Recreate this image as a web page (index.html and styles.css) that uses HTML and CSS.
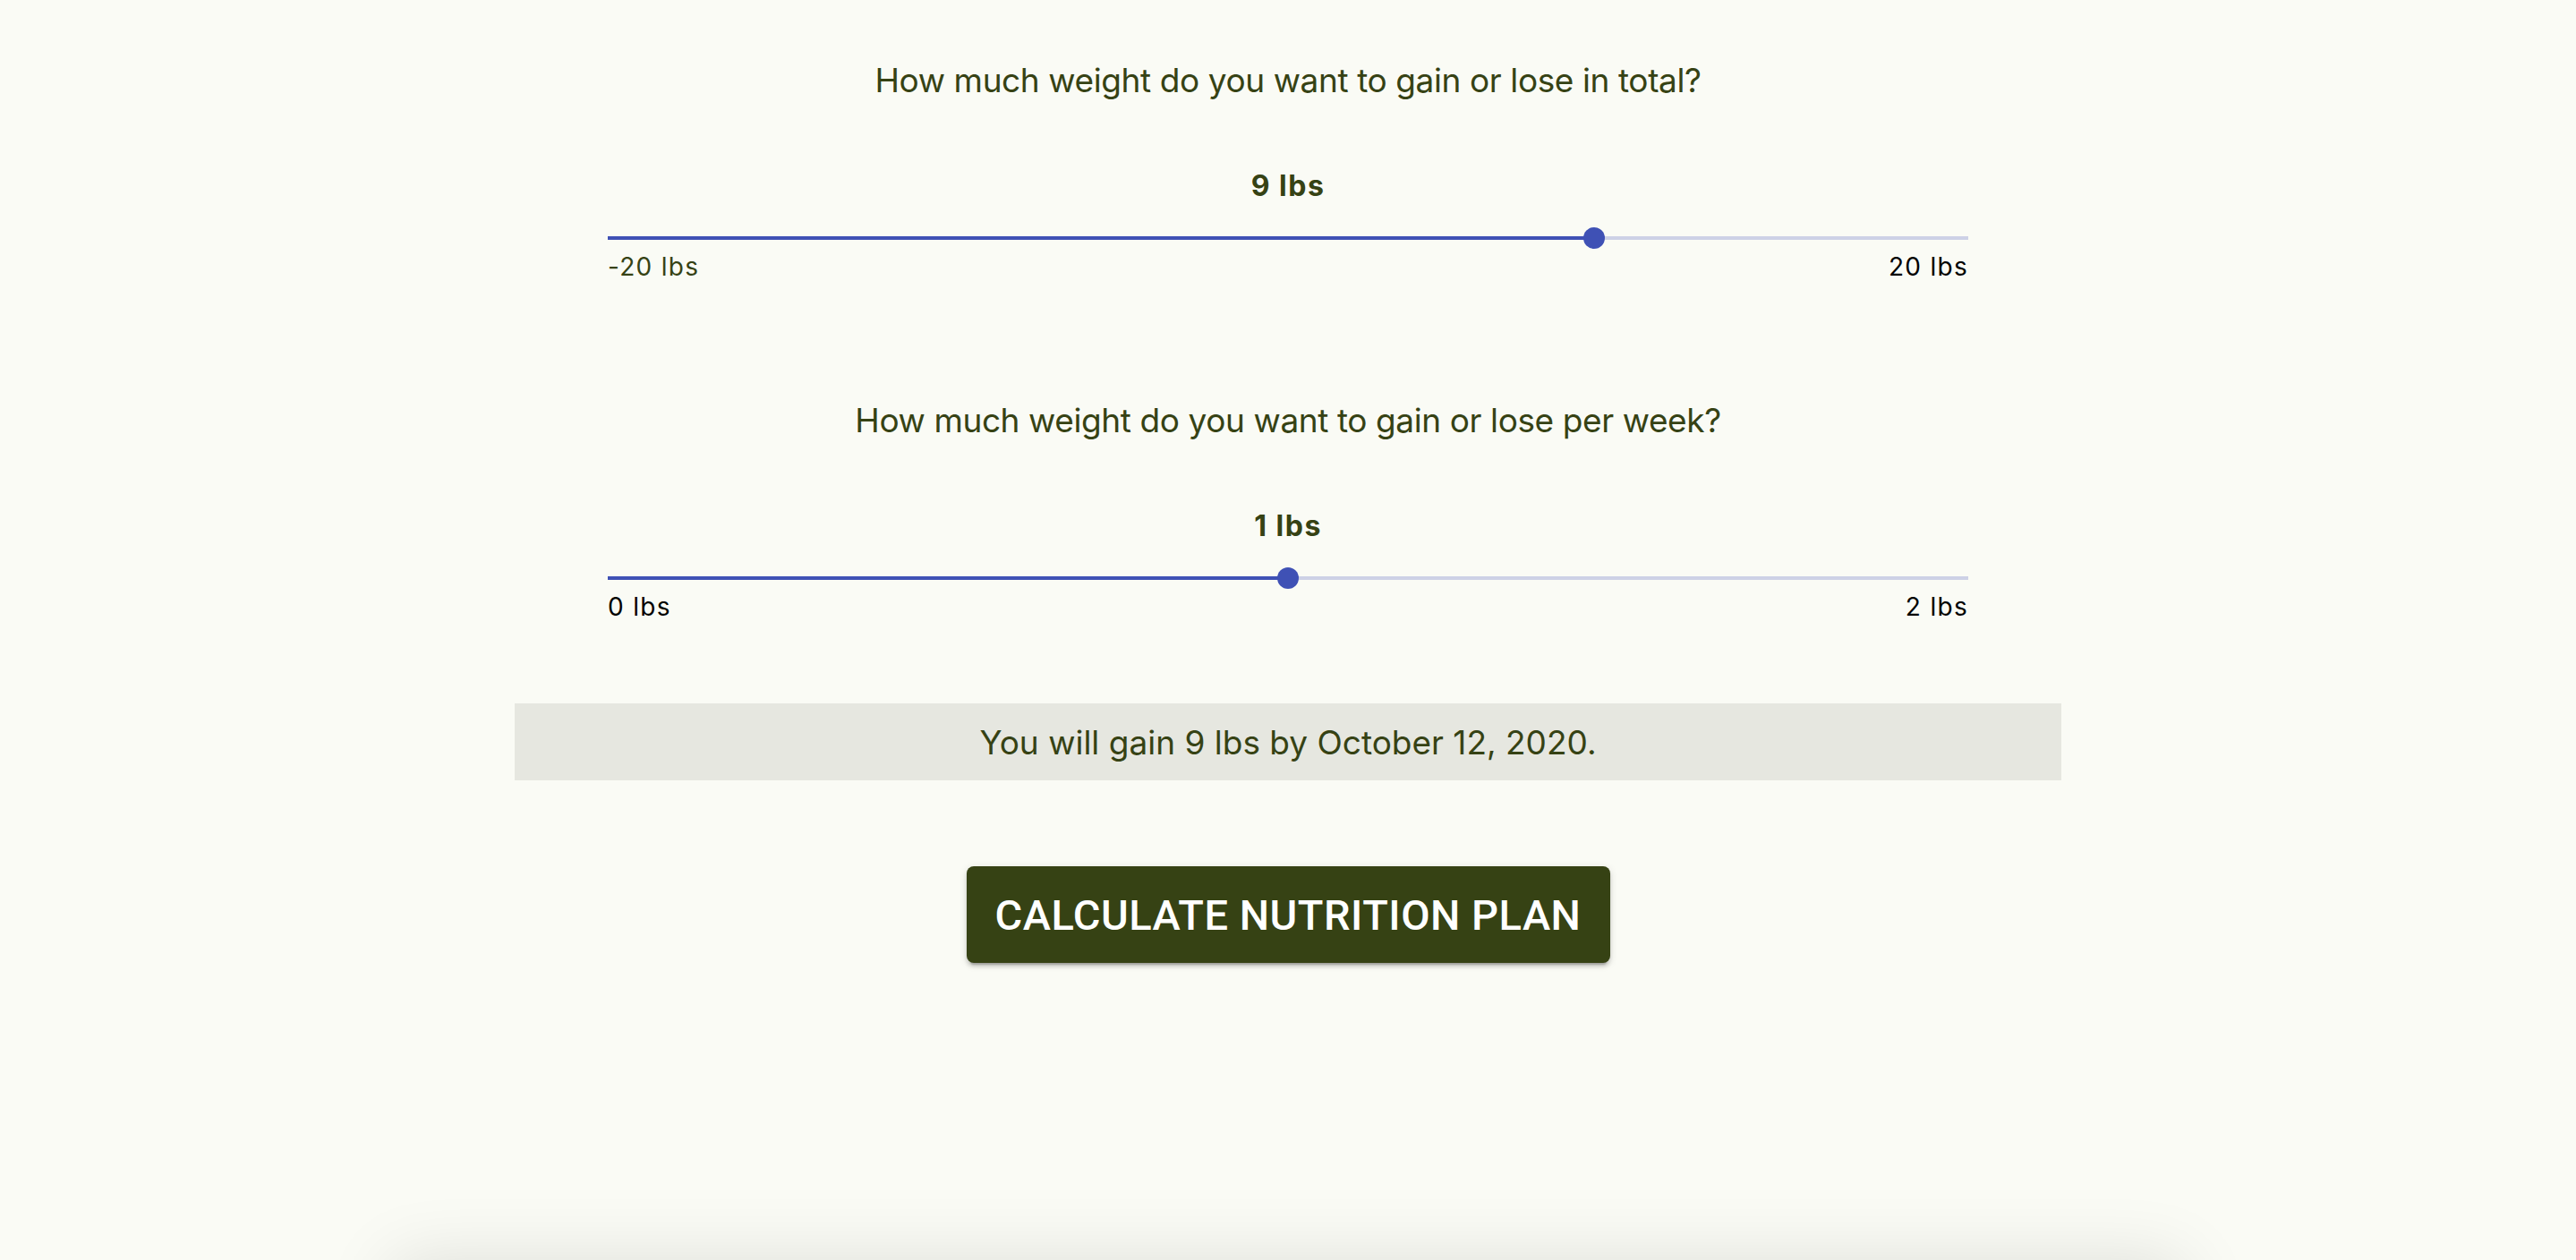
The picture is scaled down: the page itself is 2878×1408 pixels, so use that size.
FILE: index.html
```html
<!DOCTYPE html>
<html lang="en">
<head>
<meta charset="utf-8">
<title>Weight goal</title>
<link rel="stylesheet" href="styles.css">
</head>
<body>
<div class="page">
  <main class="form">
    <section class="question">
      <p class="prompt">How much weight do you want to gain or lose in total?</p>
      <div class="value">9 lbs</div>
      <div class="slider">
        <div class="rail"></div>
        <div class="track" style="width:72.5%"></div>
        <div class="thumb" style="left:72.5%"></div>
      </div>
      <div class="marks">
        <span class="mark olive">-20 lbs</span>
        <span class="mark">20 lbs</span>
      </div>
    </section>
    <section class="question second">
      <p class="prompt">How much weight do you want to gain or lose per week?</p>
      <div class="value">1 lbs</div>
      <div class="slider">
        <div class="rail"></div>
        <div class="track" style="width:50%"></div>
        <div class="thumb" style="left:50%"></div>
      </div>
      <div class="marks">
        <span class="mark">0 lbs</span>
        <span class="mark">2 lbs</span>
      </div>
    </section>
    <div class="result">You will gain 9 lbs by October 12, 2020.</div>
    <div class="actions">
      <button class="btn" type="button">CALCULATE NUTRITION PLAN</button>
    </div>
  </main>
  <div class="next-card"></div>
</div>
</body>
</html>
```

FILE: styles.css
```css
html, body {
  margin: 0;
  padding: 0;
}
body {
  background: #fafbf5;
  height: 1408px;
  overflow: hidden;
  font-family: Inter, "Noto Sans", sans-serif;
  color: #364214;
}
.page {
  display: flex;
  flex-direction: column;
  align-items: center;
}
.form {
  width: 1728px;
  padding-top: 66px;
  display: flex;
  flex-direction: column;
}
.question {
  padding: 0 104px;
  display: flex;
  flex-direction: column;
}
.question.second {
  margin-top: 132px;
}
.prompt {
  margin: 0;
  text-align: center;
  font-size: 37px;
  letter-spacing: -0.4px;
  line-height: 48px;
  font-weight: 400;
}
.value {
  margin-top: 74px;
  text-align: center;
  font-size: 32px;
  letter-spacing: 1.5px;
  line-height: 40px;
  font-weight: 700;
}
.slider {
  position: relative;
  margin-top: 26px;
  height: 24px;
}
.rail {
  position: absolute;
  left: 0;
  right: 0;
  top: 10px;
  height: 4px;
  background: #cdd1e6;
}
.track {
  position: absolute;
  left: 0;
  top: 10px;
  height: 4px;
  background: #3f51b5;
}
.thumb {
  position: absolute;
  top: 0;
  width: 24px;
  height: 24px;
  margin-left: -12px;
  border-radius: 50%;
  background: #3f51b5;
}
.marks {
  margin-top: 4px;
  display: flex;
  justify-content: space-between;
  font-size: 28px;
  letter-spacing: 1.3px;
  line-height: 32px;
  color: #000;
}
.mark.olive {
  color: #364214;
}
.result {
  margin-top: 92px;
  height: 86px;
  background: #e6e7e0;
  display: flex;
  align-items: center;
  justify-content: center;
  font-size: 37px;
}
.actions {
  margin-top: 96px;
  display: flex;
  justify-content: center;
}
.btn {
  width: 719px;
  height: 108px;
  border: 0;
  border-radius: 8px;
  background: #364214;
  color: #fff;
  font-family: Roboto, "Liberation Sans", sans-serif;
  font-weight: 500;
  font-size: 47px;
  letter-spacing: 0.5px;
  padding: 0;
  box-shadow: 0 6px 2px -4px rgba(0,0,0,0.2), 0 4px 4px 0 rgba(0,0,0,0.14), 0 2px 10px 0 rgba(0,0,0,0.12);
}
.next-card {
  margin-top: 334px;
  width: 2000px;
  height: 200px;
  background: #fafbf5;
  box-shadow: 0 0 80px rgba(0,0,0,0.12);
}
```
